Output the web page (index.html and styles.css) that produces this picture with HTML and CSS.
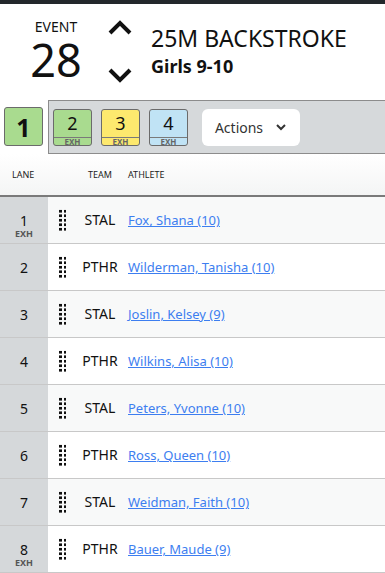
FILE: index.html
```html
<!DOCTYPE html>
<html lang="en">
<head>
  <meta charset="UTF-8" />
  <meta name="viewport" content="width=device-width, initial-scale=1.0"/>
  <title>Event 28</title>
  <link rel="stylesheet" href="styles.css">
</head>
<body>
  <div class="topbar"></div>

  <header class="event-head">
    <div class="event-num">
      <div class="event-label">EVENT</div>
      <div class="event-value">28</div>
    </div>
    <div class="event-arrows">
      <svg width="26" height="16" viewBox="0 0 26 16"><polyline points="3,13 13,3 23,13" fill="none" stroke="#111" stroke-width="4"/></svg>
      <svg width="26" height="16" viewBox="0 0 26 16"><polyline points="3,3 13,13 23,3" fill="none" stroke="#111" stroke-width="4"/></svg>
    </div>
    <div class="event-title">
      <div class="event-name">25M BACKSTROKE</div>
      <div class="event-group">Girls 9-10</div>
    </div>
  </header>

  <div class="heat-bar">
    <div class="heat-current">
      <div class="heat heat-green heat-big">1</div>
    </div>
    <div class="heat-list">
      <div class="heat heat-green"><span class="heat-no">2</span><span class="heat-exh">EXH</span></div>
      <div class="heat heat-yellow"><span class="heat-no">3</span><span class="heat-exh">EXH</span></div>
      <div class="heat heat-blue"><span class="heat-no">4</span><span class="heat-exh">EXH</span></div>
      <button class="actions-btn">Actions
        <svg width="12" height="8" viewBox="0 0 12 8"><polyline points="2,2 6,6 10,2" fill="none" stroke="#333" stroke-width="2"/></svg>
      </button>
    </div>
  </div>

  <table class="lanes">
    <thead>
      <tr>
        <th class="col-lane">LANE</th>
        <th class="col-handle"></th>
        <th class="col-team">TEAM</th>
        <th class="col-athlete">ATHLETE</th>
      </tr>
    </thead>
    <tbody id="laneRows"></tbody>
  </table>

  <script>
    const entries = [
      { lane: 1, exh: true, team: "STAL", name: "Fox, Shana (10)" },
      { lane: 2, team: "PTHR", name: "Wilderman, Tanisha (10)" },
      { lane: 3, team: "STAL", name: "Joslin, Kelsey (9)" },
      { lane: 4, team: "PTHR", name: "Wilkins, Alisa (10)" },
      { lane: 5, team: "STAL", name: "Peters, Yvonne (10)" },
      { lane: 6, team: "PTHR", name: "Ross, Queen (10)" },
      { lane: 7, team: "STAL", name: "Weidman, Faith (10)" },
      { lane: 8, exh: true, team: "PTHR", name: "Bauer, Maude (9)" }
    ];

    const tbody = document.getElementById("laneRows");
    entries.forEach(e => {
      const tr = document.createElement("tr");
      tr.innerHTML = `
        <td class="col-lane"><span class="lane-no">${e.lane}</span>${e.exh ? '<span class="lane-exh">EXH</span>' : ''}</td>
        <td class="col-handle"><span class="handle"></span></td>
        <td class="col-team">${e.team}</td>
        <td class="col-athlete"><a href="#">${e.name}</a></td>
      `;
      tbody.appendChild(tr);
    });
  </script>
</body>
</html>
```

FILE: styles.css
```css
body {
  font-family: "Noto Sans", "Open Sans", sans-serif;
  margin: 0;
  padding: 0;
  background: #fff;
  color: #111;
}

.topbar {
  height: 4px;
  background: #23272b;
}

/* Event header */
.event-head {
  display: flex;
  align-items: flex-start;
  height: 96px;
}
.event-num {
  width: 56px;
  margin-left: 28px;
  padding-top: 15px;
  text-align: center;
}
.event-label {
  font-size: 14px;
  line-height: 16px;
}
.event-value {
  font-size: 45px;
  line-height: 40px;
  margin-top: 5px;
}
.event-arrows {
  display: flex;
  flex-direction: column;
  gap: 31px;
  margin-left: 23px;
  padding-top: 16px;
}
.event-arrows svg {
  display: block;
}
.event-title {
  margin-left: 18px;
  padding-top: 20px;
}
.event-name {
  font-size: 23px;
  line-height: 28px;
}
.event-group {
  font-size: 18px;
  font-weight: bold;
  line-height: 28px;
}

/* Heat toolbar */
.heat-bar {
  display: flex;
  height: 54px;
}
.heat-current {
  width: 48px;
  padding: 7px 0 0 4px;
  box-sizing: border-box;
}
.heat-list {
  flex: 1;
  display: flex;
  align-items: center;
  gap: 9px;
  padding-left: 4px;
  background: #d6d9db;
  border-top: 1px solid #8c8c8c;
  border-bottom: 1px solid #8c8c8c;
  border-left: 1px solid #8c8c8c;
}
.heat {
  width: 39px;
  height: 37px;
  box-sizing: border-box;
  border: 1px solid #6b6b6b;
  border-radius: 3px;
  display: flex;
  flex-direction: column;
  color: #111;
  overflow: hidden;
}
.heat-big {
  height: 39px;
  font-size: 25px;
  font-weight: bold;
  align-items: center;
  justify-content: center;
}
.heat-green { background: #a9db8f; }
.heat-yellow { background: #fde96e; }
.heat-blue { background: #c0e3f5; }
.heat-no {
  flex: 1;
  text-align: center;
  font-size: 18px;
  line-height: 27px;
}
.heat-exh {
  border-top: 1px solid #7a7a7a;
  text-align: center;
  font-size: 8px;
  line-height: 8px;
  font-weight: bold;
  color: #666;
}
.actions-btn {
  margin-left: 5px;
  width: 98px;
  height: 37px;
  border: none;
  border-radius: 6px;
  background: #fff;
  font-family: inherit;
  font-size: 14px;
  color: #333;
  display: flex;
  align-items: center;
  justify-content: center;
  gap: 12px;
}

/* Lanes table */
.lanes {
  width: 100%;
  border-collapse: collapse;
  table-layout: fixed;
}
.lanes th,
.lanes td {
  box-sizing: border-box;
  padding: 0;
}
.lanes th {
  height: 42px;
  font-size: 9px;
  font-weight: normal;
  text-align: left;
  color: #222;
  background: linear-gradient(#fff, #f4f5f5);
  border-bottom: 2px solid #7a7a7a;
}
.lanes th.col-lane {
  padding-left: 12px;
}
.lanes th.col-team,
.lanes td.col-team {
  text-align: center;
}
.lanes td {
  height: 47px;
  font-size: 14px;
  border-bottom: 1px solid #c8c8c8;
}
.lanes tbody tr:nth-child(odd) td {
  background: #f8f9f9;
}
.lanes td.col-lane {
  background: #d5d8da !important;
  text-align: center;
  vertical-align: top;
  padding-top: 15px;
}
.col-lane { width: 48px; }
.col-handle { width: 30px; }
.col-team { width: 44px; }
.lanes th.col-athlete,
.lanes td.col-athlete {
  padding-left: 6px;
}
.lane-no {
  display: block;
  line-height: 17px;
}
.lane-exh {
  display: block;
  font-size: 9px;
  font-weight: bold;
  color: #555;
  line-height: 10px;
}
.handle {
  display: block;
  margin-left: 10px;
  width: 8px;
  height: 22px;
  background: radial-gradient(circle, #111 1.4px, transparent 1.7px) 0 0 / 5px 4.5px;
}
.col-athlete a {
  color: #3d7ef0;
  font-size: 13px;
}
```
